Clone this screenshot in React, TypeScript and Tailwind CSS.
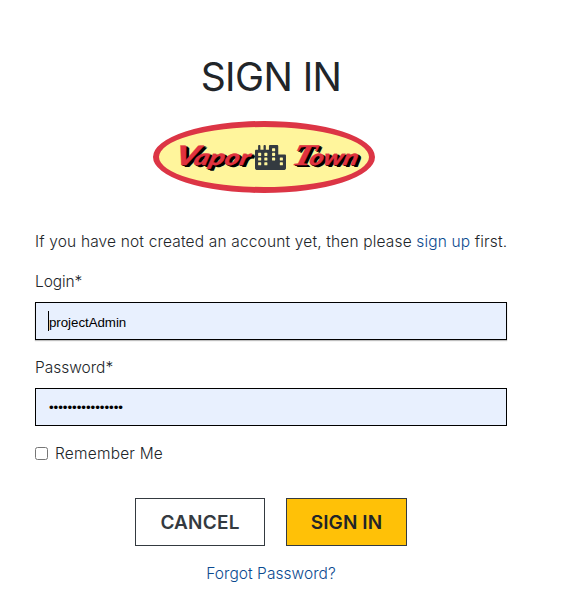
import { FaCity } from "react-icons/fa";

const wordmark =
  "whitespace-nowrap font-['Lato',sans-serif] text-[22px] font-black italic leading-[30px] text-[#e0323f] [text-shadow:1px_1px_0_#000,2px_1px_0_#000,3px_2px_0_#000] [-webkit-text-stroke:0.3px_#e0323f]";

function Logo() {
  return (
    <div className="ml-[118px] flex h-[72px] w-[222px] items-center rounded-[50%] border-[6px] border-[#dc3545] bg-[#fff59c] pl-[20px]">
      <div className={wordmark + " w-[76px] origin-left -translate-x-[3px] -translate-y-px -skew-x-12 scale-x-[1.3]"}>
        <span className="text-[27px] tracking-[-3px]">V</span>apor
      </div>
      <FaCity className="relative h-[25px] w-[31px] shrink-0 text-[#343a40]" />
      <div className={wordmark + " ml-[10px] w-[68px] origin-left -translate-x-[3px] -translate-y-px -skew-x-12 scale-x-[1.22]"}>
        <span className="font-['Liberation_Serif',serif] text-[30px] font-bold tracking-[-4px]">T</span>own
      </div>
    </div>
  );
}

export default function App() {
  return (
    <main className="min-h-[605px] w-full bg-white pl-[35px] pt-[52px] font-['Inter',sans-serif] text-[#212529]">
      <form className="flex w-[472px] flex-col">
        <h1 className="h-12 whitespace-nowrap pt-px text-center text-[39px] leading-[48px] tracking-[-0.6px]">SIGN IN</h1>
        <div className="mt-[21px]">
          <Logo />
        </div>
        <p className="mt-[37px] h-6 whitespace-nowrap text-[15.5px] font-light leading-6 tracking-[0.16px]">
          If you have not created an account yet, then please <a className="text-[#0b4a8f]">sign up</a> first.
        </p>
        <label className="mt-4 h-6 text-[15.5px] font-light leading-6 tracking-[-0.1px]">Login*</label>
        <div className="mt-2 flex h-[38px] items-center border border-black bg-[#e8f0fe] pl-3 font-['Liberation_Sans',sans-serif] text-[13.33px] text-black shadow-[0_1px_1px_#00000040]">
          <span className="h-5 w-px bg-black" />
          <span className="pt-[3px] tracking-[-0.05px]">projectAdmin</span>
        </div>
        <label className="mt-4 h-6 text-[15.5px] font-light leading-6">Password*</label>
        <div className="mt-2 flex h-[38px] items-center border border-black bg-[#e8f0fe] pl-[13px] font-['Liberation_Sans',sans-serif] text-[13.33px] text-black">
          <span className="pt-[2px] tracking-[-0.05px]">••••••••••••••••</span>
        </div>
        <label className="mt-4 flex h-6 items-center text-[15.5px] font-light tracking-[0.2px]">
          <input type="checkbox" className="mr-[7px] size-[13px] -translate-y-px" />
          Remember Me
        </label>
        <div className="mt-8 flex h-12 gap-[21px] pl-[100px] text-[19px] font-semibold">
          <button type="button" className="w-[130px] border border-[#343a40] pt-[3px] tracking-[0.2px] text-[#343a40]">CANCEL</button>
          <button type="button" className="w-[121px] whitespace-nowrap border border-[#343a40] bg-[#ffc107] pt-[3px] tracking-[0.1px] text-[#212529]">SIGN IN</button>
        </div>
        <a className="mt-4 h-6 text-center text-[15.5px] font-light leading-6 tracking-[0.05px] text-[#0b4a8f]">Forgot Password?</a>
      </form>
    </main>
  );
}
